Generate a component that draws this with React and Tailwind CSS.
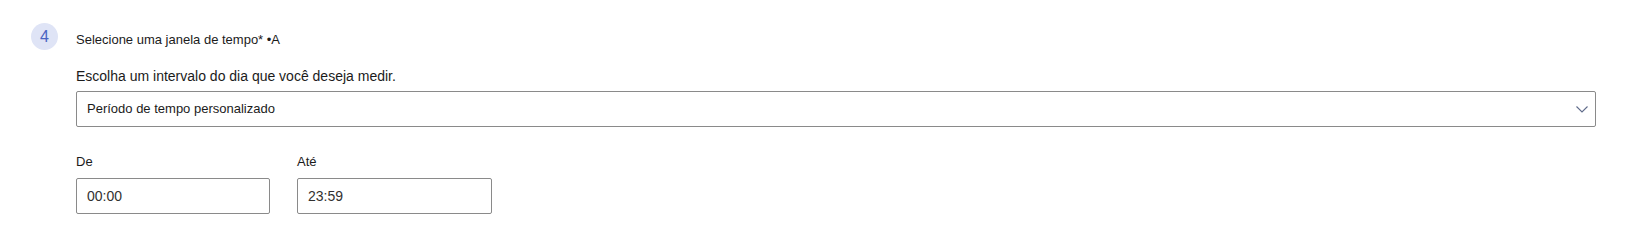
import React from "react";

export default function App() {
  return (
    <div className="w-[1634px] h-[251px] bg-white" style={{ fontFamily: '"Liberation Sans", Arial, sans-serif' }}>
      <div className="flex items-start pl-[31px] pt-[23px] pr-[38px]">
        <div className="w-[27px] h-[27px] shrink-0 rounded-full bg-[#dfe4f6] flex items-center justify-center text-[16px] text-[#4a63c2] leading-none">
          4
        </div>
        <div className="ml-[18px] flex-1 flex flex-col">
          <div className="mt-[7px] h-[20px] leading-[20px] text-[13px] text-[#1b1b1b]">
            Selecione uma janela de tempo* •A
          </div>
          <div className="mt-[16px] h-[20px] leading-[20px] text-[14px] text-[#1b1b1b]">
            Escolha um intervalo do dia que você deseja medir.
          </div>
          <div className="mt-[5px] h-[36px] border border-[#8a8a8a] rounded-[2px] flex items-center justify-between pl-[10px] pr-[6px]">
            <span className="text-[13px] text-[#1b1b1b]">Período de tempo personalizado</span>
            <svg width="14" height="14" viewBox="0 0 14 14" fill="none">
              <path d="M1.5 4.5 L7 10 L12.5 4.5" stroke="#5f6b8a" strokeWidth="1.1" />
            </svg>
          </div>
          <div className="mt-[25px] flex gap-[27px]">
            <div className="flex flex-col">
              <div className="h-[20px] leading-[20px] text-[13px] text-[#1b1b1b]">De</div>
              <div className="mt-[6px] w-[194px] h-[36px] border border-[#8a8a8a] rounded-[2px] flex items-center pl-[10px] text-[14px] text-[#323130]">
                00:00
              </div>
            </div>
            <div className="flex flex-col">
              <div className="h-[20px] leading-[20px] text-[13px] text-[#1b1b1b]">Até</div>
              <div className="mt-[6px] w-[195px] h-[36px] border border-[#8a8a8a] rounded-[2px] flex items-center pl-[10px] text-[14px] text-[#323130]">
                23:59
              </div>
            </div>
          </div>
        </div>
      </div>
    </div>
  );
}
